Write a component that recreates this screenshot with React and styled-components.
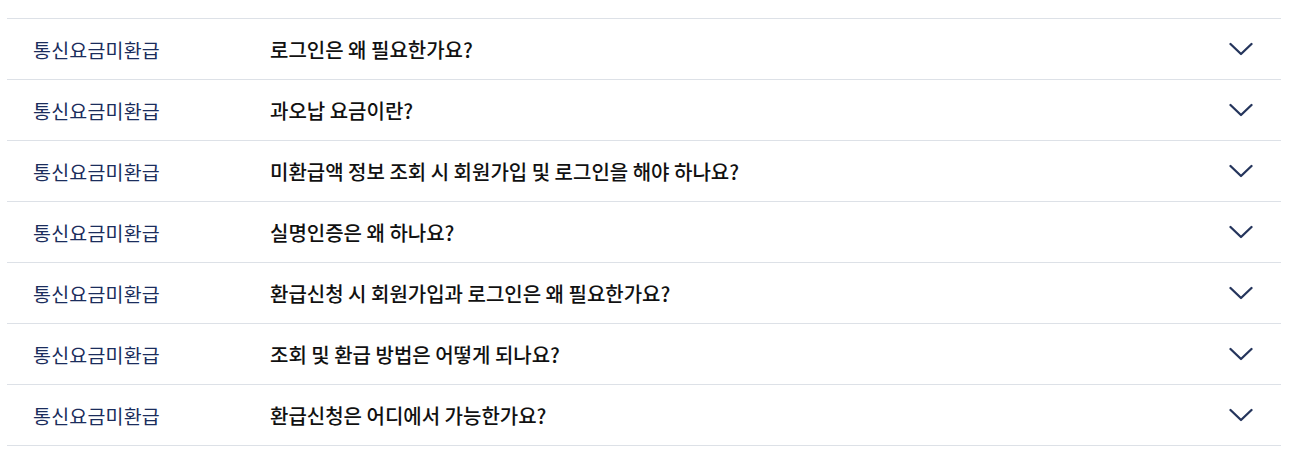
import React from "react";
import styled, { createGlobalStyle } from "styled-components";

const Global = createGlobalStyle`
  body { margin: 0; background: #fff; font-family: "Noto Sans CJK KR", "Noto Sans", sans-serif; }
`;

const List = styled.ul`
  list-style: none;
  margin: 18px 12px 0 7px;
  padding: 0;
  border-top: 1px solid #dde1e7;
`;

const Row = styled.li`
  display: flex;
  align-items: center;
  height: 60px;
  padding: 0 28px 0 26px;
  border-bottom: 1px solid #dde1e7;
`;

const Category = styled.span`
  flex: 0 0 237px;
  font-size: 19.5px;
  letter-spacing: 0.2px;
  color: #1b2d5c;
  font-weight: 400;
`;

const Question = styled.span`
  flex: 1;
  font-size: 20px;
  letter-spacing: 0;
  color: #111;
  font-weight: 500;
`;

const Toggle = styled.span`
  display: flex;
  color: #25355c;
`;

const Chevron = () => (
  <svg width="24" height="14" viewBox="0 0 24 14" fill="none">
    <path d="M1.5 2 L12 12 L22.5 2" stroke="currentColor" strokeWidth="2.3" strokeLinecap="round" strokeLinejoin="round" />
  </svg>
);

const items = [
  "로그인은 왜 필요한가요?",
  "과오납 요금이란?",
  "미환급액 정보 조회 시 회원가입 및 로그인을 해야 하나요?",
  "실명인증은 왜 하나요?",
  "환급신청 시 회원가입과 로그인은 왜 필요한가요?",
  "조회 및 환급 방법은 어떻게 되나요?",
  "환급신청은 어디에서 가능한가요?",
];

export default function App() {
  return (
    <>
      <Global />
      <List>
        {items.map((q) => (
          <Row key={q}>
            <Category>통신요금미환급</Category>
            <Question>{q}</Question>
            <Toggle><Chevron /></Toggle>
          </Row>
        ))}
      </List>
    </>
  );
}
